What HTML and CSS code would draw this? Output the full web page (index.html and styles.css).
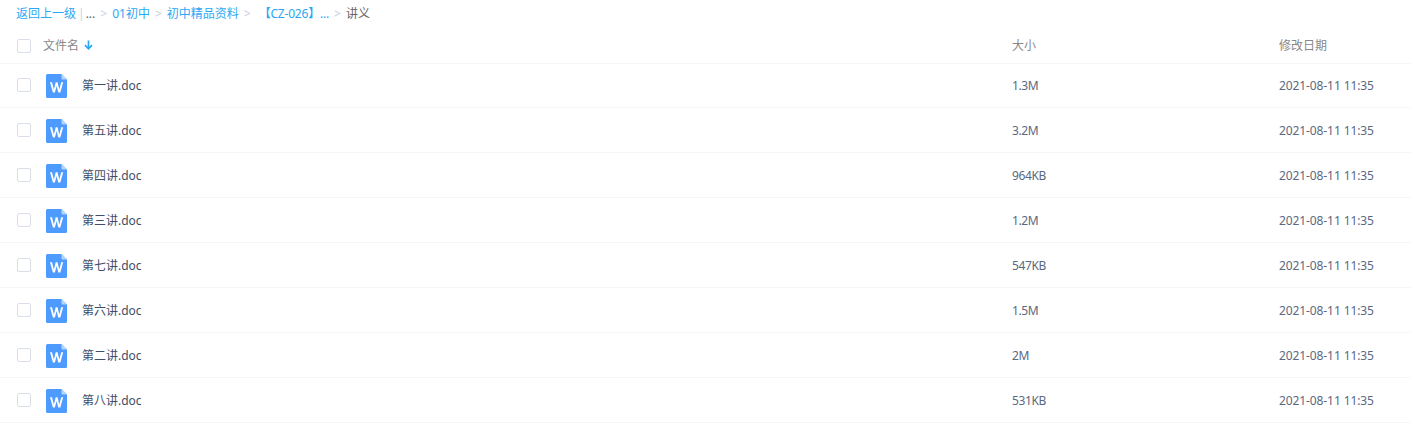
FILE: index.html
```html
<!DOCTYPE html>
<html lang="zh-CN">
<head>
  <meta charset="UTF-8" />
  <title>讲义</title>
  <link rel="stylesheet" href="styles.css">
</head>
<body>
  <!-- 面包屑 -->
  <div class="crumbs">
    <a class="crumb-link">返回上一级</a>
    <span class="crumb-bar">|</span>
    <span class="crumb-text">...</span>
    <span class="crumb-sep">&gt;</span>
    <a class="crumb-link">01初中</a>
    <span class="crumb-sep">&gt;</span>
    <a class="crumb-link">初中精品资料</a>
    <span class="crumb-sep">&gt;</span>
    <a class="crumb-link crumb-long">【CZ-026】...</a>
    <span class="crumb-sep">&gt;</span>
    <span class="crumb-text">讲义</span>
  </div>

  <!-- 表头 -->
  <div class="row row-head">
    <span class="check"></span>
    <div class="col-name head-name">文件名
      <svg class="sort-icon" width="9" height="10" viewBox="0 0 9 10"><path d="M4.5 0.5v8M1 5.2l3.5 3.6L8 5.2" fill="none" stroke="#2aa7f5" stroke-width="1.7"/></svg>
    </div>
    <div class="col-size">大小</div>
    <div class="col-date">修改日期</div>
  </div>

  <!-- 文件列表 -->
  <div class="row">
    <span class="check"></span>
    <svg class="doc-icon" width="22" height="24" viewBox="0 0 22 24"><use href="#doc"/></svg>
    <div class="col-name">第一讲.doc</div>
    <div class="col-size">1.3M</div>
    <div class="col-date">2021-08-11 11:35</div>
  </div>
  <div class="row">
    <span class="check"></span>
    <svg class="doc-icon" width="22" height="24" viewBox="0 0 22 24"><use href="#doc"/></svg>
    <div class="col-name">第五讲.doc</div>
    <div class="col-size">3.2M</div>
    <div class="col-date">2021-08-11 11:35</div>
  </div>
  <div class="row">
    <span class="check"></span>
    <svg class="doc-icon" width="22" height="24" viewBox="0 0 22 24"><use href="#doc"/></svg>
    <div class="col-name">第四讲.doc</div>
    <div class="col-size">964KB</div>
    <div class="col-date">2021-08-11 11:35</div>
  </div>
  <div class="row">
    <span class="check"></span>
    <svg class="doc-icon" width="22" height="24" viewBox="0 0 22 24"><use href="#doc"/></svg>
    <div class="col-name">第三讲.doc</div>
    <div class="col-size">1.2M</div>
    <div class="col-date">2021-08-11 11:35</div>
  </div>
  <div class="row">
    <span class="check"></span>
    <svg class="doc-icon" width="22" height="24" viewBox="0 0 22 24"><use href="#doc"/></svg>
    <div class="col-name">第七讲.doc</div>
    <div class="col-size">547KB</div>
    <div class="col-date">2021-08-11 11:35</div>
  </div>
  <div class="row">
    <span class="check"></span>
    <svg class="doc-icon" width="22" height="24" viewBox="0 0 22 24"><use href="#doc"/></svg>
    <div class="col-name">第六讲.doc</div>
    <div class="col-size">1.5M</div>
    <div class="col-date">2021-08-11 11:35</div>
  </div>
  <div class="row">
    <span class="check"></span>
    <svg class="doc-icon" width="22" height="24" viewBox="0 0 22 24"><use href="#doc"/></svg>
    <div class="col-name">第二讲.doc</div>
    <div class="col-size">2M</div>
    <div class="col-date">2021-08-11 11:35</div>
  </div>
  <div class="row">
    <span class="check"></span>
    <svg class="doc-icon" width="22" height="24" viewBox="0 0 22 24"><use href="#doc"/></svg>
    <div class="col-name">第八讲.doc</div>
    <div class="col-size">531KB</div>
    <div class="col-date">2021-08-11 11:35</div>
  </div>

  <!-- Word 图标 -->
  <svg class="icon-defs" width="0" height="0">
    <symbol id="doc" viewBox="0 0 22 24">
      <path d="M1.5 0H15.5L21 5.5V22.5A1.5 1.5 0 0 1 19.5 24H1.5A1.5 1.5 0 0 1 0 22.5V1.5A1.5 1.5 0 0 1 1.5 0Z" fill="#4d9bfe"/>
      <path d="M15.5 0L21 5.5H16.5A1 1 0 0 1 15.5 4.5Z" fill="#b5d4fd"/>
      <path d="M4 8.2L6.9 18.4H8.9L10.6 12L12.3 18.4H14.3L17.2 8.2H15.2L13.3 15.4L11.5 8.2H9.7L7.9 15.4L6 8.2Z" fill="#fff"/>
    </symbol>
  </svg>
</body>
</html>
```

FILE: styles.css
```css
/* 全局样式重置 */
* {
  box-sizing: border-box;
  margin: 0;
  padding: 0;
}

body {
  width: 1411px;
  height: 431px;
  overflow: hidden;
  background: #fff;
  color: #424e67;
  font-family: "Noto Sans", "Noto Sans CJK SC", sans-serif;
  font-size: 12px;
}

/* 面包屑 */
.crumbs {
  display: flex;
  align-items: center;
  height: 28px;
  padding-left: 16px;
  line-height: 28px;
}

.crumb-link {
  color: #2aa7f5;
}

.crumb-text {
  color: #666;
}

.crumb-bar {
  margin: 0 1px 0 2px;
  color: #c8d0dc;
}

.crumb-sep {
  margin: 0 5px;
  color: #c4cfe0;
}

.crumb-long {
  margin-left: 3px;
  letter-spacing: -0.2px;
}

/* 行 */
.row {
  display: flex;
  align-items: center;
  height: 45px;
  padding-left: 17px;
  border-bottom: 1px solid #f4f6fa;
}

.row-head {
  height: 36px;
  color: #888;
}

/* 第一行比其余行矮 1px */
.row-head + .row {
  height: 44px;
  padding-bottom: 1px;
}

.row-head .col-name,
.row-head .col-size,
.row-head .col-date {
  margin-bottom: 2px;
}

.check {
  flex: none;
  width: 14px;
  height: 14px;
  border: 1px solid #d9dee8;
  border-radius: 2px;
}

.doc-icon {
  flex: none;
  margin-left: 15px;
  margin-top: 2px;
}

.col-name {
  flex: 1;
  margin-left: 14px;
}

.head-name {
  display: flex;
  align-items: center;
  gap: 5px;
  margin-left: 12px;
}

.col-size {
  flex: none;
  width: 267px;
  color: #5c6880;
  letter-spacing: -0.4px;
}

.col-date {
  flex: none;
  width: 132px;
  color: #5c6880;
  letter-spacing: -0.1px;
}

.row-head .col-size,
.row-head .col-date {
  color: #888;
  letter-spacing: 0;
}

.icon-defs {
  position: absolute;
}
```
